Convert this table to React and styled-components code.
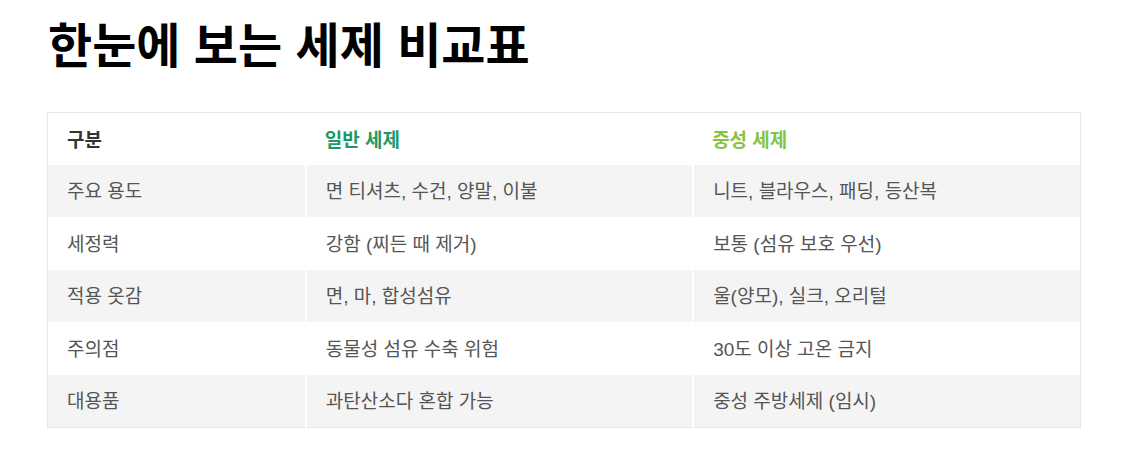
import styled, { createGlobalStyle } from "styled-components";

const GlobalStyle = createGlobalStyle`
    body {
        margin: 0;
        background: #fff;
        font-family: "Liberation Sans", "Noto Sans CJK KR", sans-serif;
    }
`

const Page = styled.div`
    padding: 18px 46px 40px 47px;
`
const Title = styled.h1`
    font-size: 48px;
    font-weight: 700;
    color: #000;
    margin: 0 0 36px 1px;
    line-height: 1.2;
`
const Table = styled.table`
    width: 100%;
    border-collapse: collapse;
    border: 1px solid #e6e6e6;
    font-size: 19px;
`
const HeadCell = styled.th`
    text-align: left;
    font-weight: 700;
    padding: 0 19px;
    height: 52px;
    color: ${p => p.color || "#333"};
    border: none;
`
const Row = styled.tr`
    background: ${p => p.striped ? "#f4f4f4" : "#fff"};
`
const Cell = styled.td`
    padding: 0 19px 2px;
    height: 50.5px;
    color: #555;
    border-right: 2px solid #fff;
    &:last-child {
        border-right: none;
    }
`

const rows = [
    ["주요 용도", "면 티셔츠, 수건, 양말, 이불", "니트, 블라우스, 패딩, 등산복"],
    ["세정력", "강함 (찌든 때 제거)", "보통 (섬유 보호 우선)"],
    ["적용 옷감", "면, 마, 합성섬유", "울(양모), 실크, 오리털"],
    ["주의점", "동물성 섬유 수축 위험", "30도 이상 고온 금지"],
    ["대용품", "과탄산소다 혼합 가능", "중성 주방세제 (임시)"],
]

export default function App(){
    return (
        <Page>
            <GlobalStyle />
            <Title>한눈에 보는 세제 비교표</Title>
            <Table>
                <colgroup>
                    <col style={{ width: "25%" }} />
                    <col style={{ width: "37.5%" }} />
                    <col style={{ width: "37.5%" }} />
                </colgroup>
                <thead>
                    <tr>
                        <HeadCell>구분</HeadCell>
                        <HeadCell color="#1f9868">일반 세제</HeadCell>
                        <HeadCell color="#86c443">중성 세제</HeadCell>
                    </tr>
                </thead>
                <tbody>
                    {rows.map((r, i) => (
                        <Row key={r[0]} striped={i % 2 === 0}>
                            {r.map(c => <Cell key={c}>{c}</Cell>)}
                        </Row>
                    ))}
                </tbody>
            </Table>
        </Page>
    )
}
